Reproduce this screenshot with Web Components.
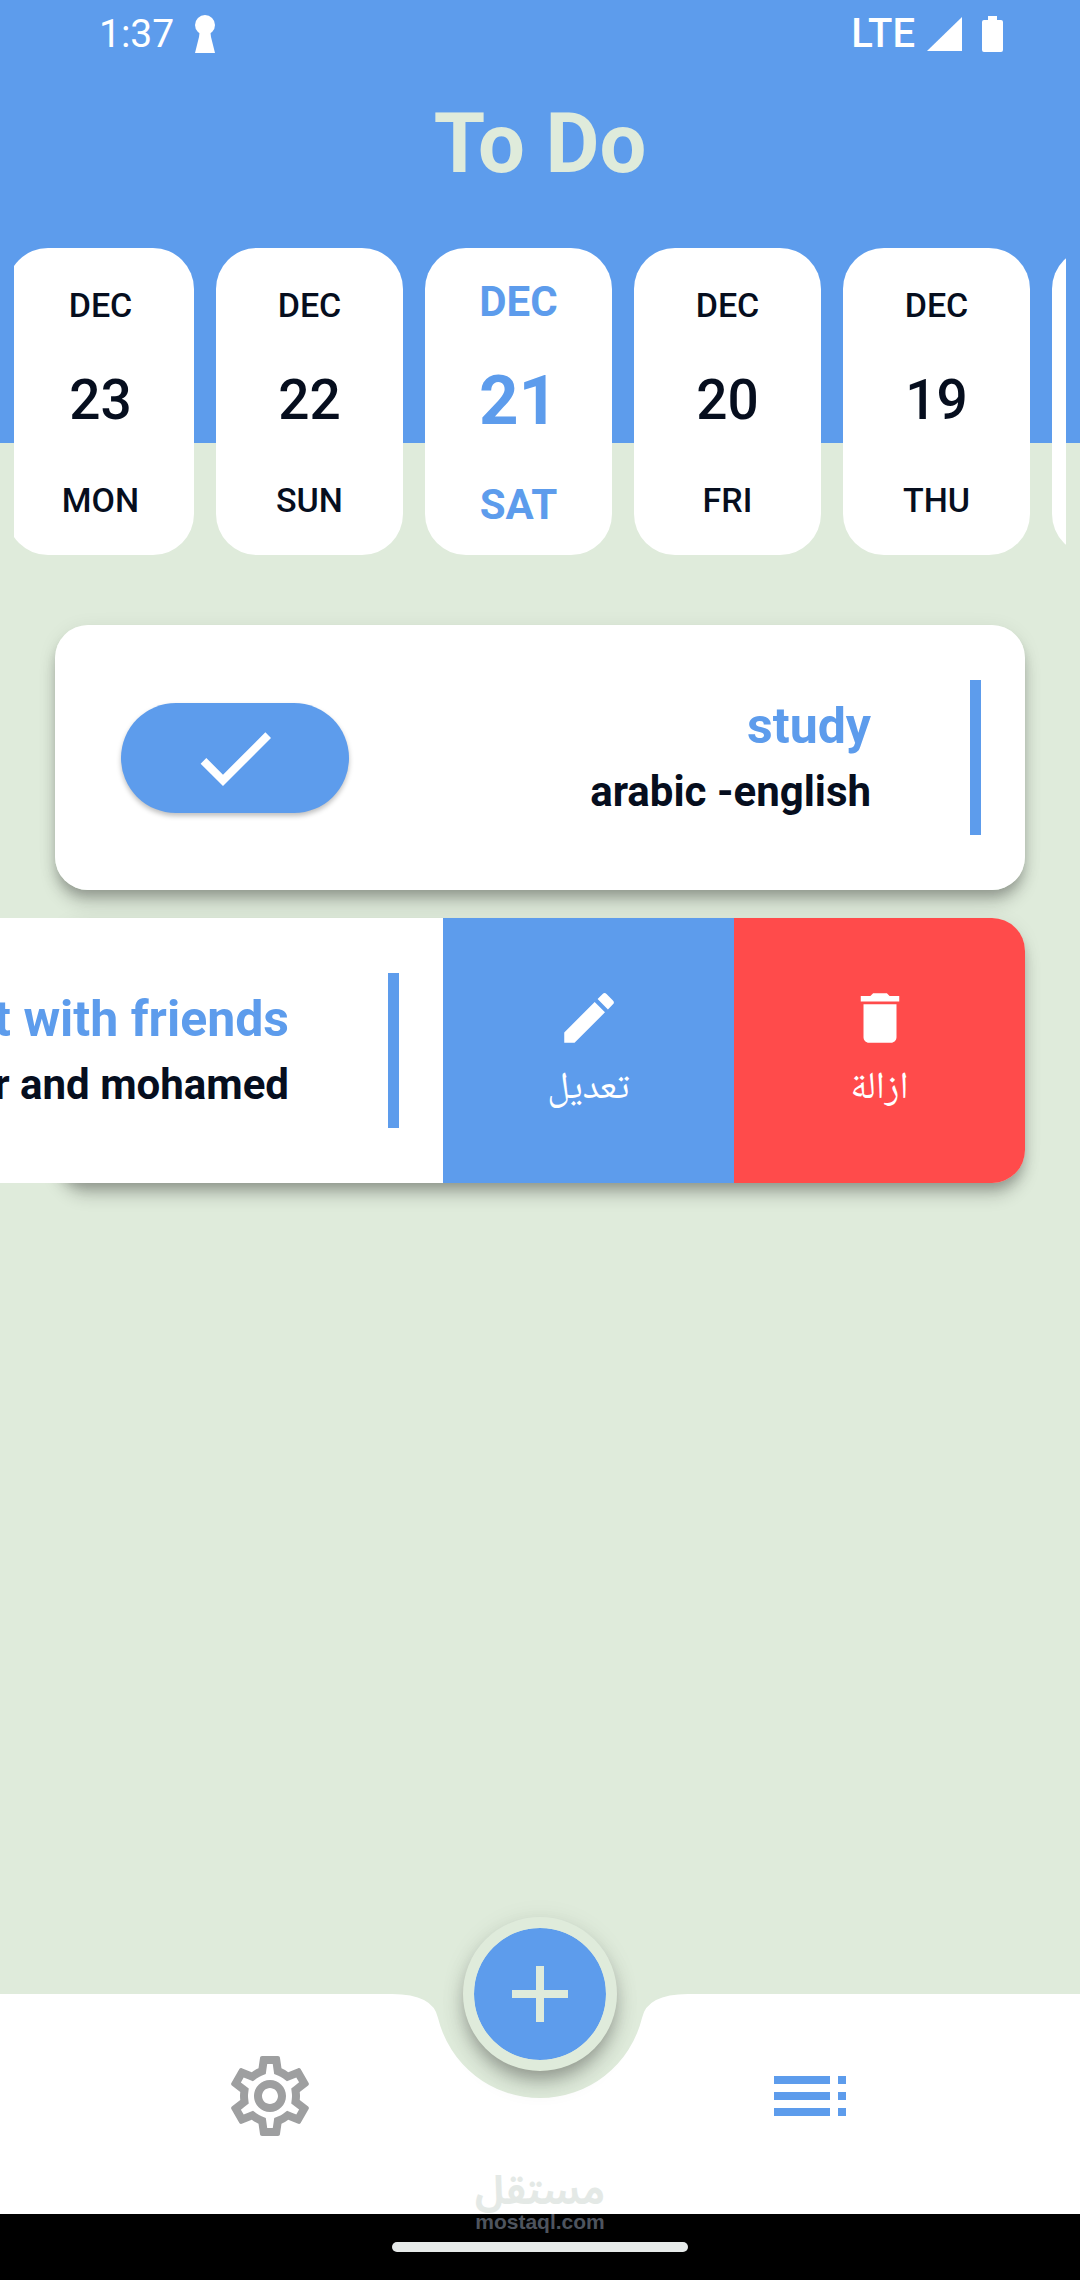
<!DOCTYPE html>
<html lang="en">
<head>
<meta charset="utf-8">
<meta name="viewport" content="width=device-width, initial-scale=1">
<title>To Do</title>
<style>
:root { --blue: #5d9cec; --mint: #dfebdb; --ink: #060e1e; --red: #ff4b4b; --grey: #9e9fa0; }
body { margin: 0; font-family: Roboto, "Noto Naskh Arabic", "Noto Sans Arabic", "Noto Sans", sans-serif; color: var(--ink); background: var(--mint); }
</style>
</head>
<body>
<todo-app></todo-app>
<script>
const reset = `
  * { box-sizing: border-box; }
  button { font: inherit; color: inherit; background: none; border: 0; padding: 0; margin: 0; cursor: pointer; }
  svg { display: block; }
`;
class Base extends HTMLElement {
  connectedCallback() {
    if (this.shadowRoot) return;
    this.attachShadow({ mode: "open" }).innerHTML = `<style>${reset}</style>` + this.view();
  }
}

customElements.define("status-bar", class extends Base {
  view() {
    return `<style>
      :host { display: flex; align-items: center; justify-content: space-between; height: 68px; padding: 0 77px 0 99px; color: #fff; font-size: 39px; line-height: 46px; }
      div { display: flex; align-items: center; }
      .l { gap: 20px; } .r { gap: 12px; }
      .lte { font-weight: 500; font-size: 40px; }
      .bat { margin-left: 8px; }
    </style>
    <div class="l"><span>1:37</span>
      <svg width="22" height="38" viewBox="0 0 22 38" fill="currentColor"><circle cx="11" cy="10" r="10"/><path d="M6 14h10l1 8 4 16H1l4-16z"/></svg></div>
    <div class="r"><span class="lte">LTE</span>
      <svg width="35" height="34" viewBox="0 0 35 34" fill="currentColor"><path d="M35 0v34H0z"/></svg>
      <svg class="bat" width="21" height="36" viewBox="0 0 21 36" fill="currentColor"><path d="M6 0h9v4h4a2 2 0 0 1 2 2v28a2 2 0 0 1-2 2H2a2 2 0 0 1-2-2V6a2 2 0 0 1 2-2h4z"/></svg></div>`;
  }
});

customElements.define("date-card", class extends Base {
  view() {
    return `<style>
      :host { display: block; flex: 0 0 187px; }
      button { display: flex; flex-direction: column; align-items: center; justify-content: space-between; width: 100%; height: 307px; padding: 37px 0 35px; border-radius: 41px; background: #fff; font-size: 34px; line-height: 40px; font-weight: 500; }
      .n { font-size: 55px; line-height: 64px; margin-bottom: 6px; }
      :host([selected]) button { color: var(--blue); font-weight: 700; font-size: 42px; line-height: 48px; padding: 30px 0 26px; }
      :host([selected]) .n { font-size: 69px; line-height: 80px; }
    </style>
    <button type="button"><slot name="month"></slot><span class="n"><slot></slot></span><slot name="day"></slot></button>`;
  }
});

customElements.define("date-strip", class extends Base {
  view() {
    return `<style>
      :host { display: block; margin: 0 14px; overflow: hidden; }
      div { display: flex; gap: 22px; margin-left: -7px; }
    </style><div><slot></slot></div>`;
  }
});

customElements.define("task-action", class extends Base {
  view() {
    return `<style>
      :host { display: flex; flex: 1; }
      button { flex: 1; display: flex; flex-direction: column; align-items: center; justify-content: center; gap: 3px; color: #fff; font-size: 38px; line-height: 62px; }
    </style><button type="button"><slot name="icon"></slot><span dir="rtl" lang="ar"><slot></slot></span></button>`;
  }
});

customElements.define("task-row", class extends Base {
  view() {
    return `<style>
      :host { display: flex; justify-content: flex-end; border-radius: 33px; box-shadow: 0 8px 11px -3px rgba(0,0,0,.2), 0 14px 16px rgba(0,0,0,.15), 0 3px 20px rgba(0,0,0,.07); }
      .card { flex: 0 0 100%; display: flex; align-items: center; padding: 55px 44px 55px 66px; background: #fff; border-radius: 33px; }
      :host([open]) .card { border-radius: 0; }
      .done { width: 228px; height: 110px; border-radius: 55px; background: var(--blue); color: #fff; display: grid; place-items: center; box-shadow: 0 3px 5px rgba(0,0,0,.25); }
      .text { flex: 1; margin-right: 99px; padding-top: 2px; text-align: right; font-weight: 700; white-space: nowrap; line-height: 66px; }
      .title { color: var(--blue); font-size: 50px; }
      .note { font-size: 42px; }
      .bar { width: 11px; height: 155px; background: var(--blue); }
      .actions { display: none; }
      :host([open]) .actions { flex: 0 0 60%; display: flex; border-radius: 0 33px 33px 0; overflow: hidden; }
    </style>
    <div class="card">
      <button class="done" type="button" aria-label="Done"><svg width="96" height="96" viewBox="0 0 24 24" fill="currentColor"><path d="M9 16.17 4.83 12l-1.42 1.41L9 19 21 7l-1.41-1.41z"/></svg></button>
      <div class="text"><div class="title"><slot name="title"></slot></div><div class="note"><slot name="note"></slot></div></div>
      <div class="bar"></div>
    </div>
    <div class="actions"><slot name="actions"></slot></div>`;
  }
});

customElements.define("bottom-nav", class extends Base {
  view() {
    return `<style>
      :host { display: grid; grid-template: 220px / 1fr; }
      .bg, .tabs, .fab { grid-area: 1 / 1; }
      .bg { display: flex; }
      .bg i { flex: 1; background: #fff; }
      .tabs { display: flex; padding-bottom: 16px; }
      .tabs button { flex: 1; display: grid; place-items: center; color: var(--grey); }
      .tabs .on { color: var(--blue); }
      .fab { justify-self: center; align-self: start; margin-top: -77px; width: 154px; height: 154px; border: 11px solid var(--mint); border-radius: 50%; background: var(--blue) padding-box; color: var(--mint); display: grid; place-items: center; box-shadow: 0 10px 14px -3px rgba(0,0,0,.18), 0 14px 22px rgba(0,0,0,.15), 0 3px 26px rgba(0,0,0,.08); }
    </style>
    <div class="bg"><i></i><svg width="300" height="220" viewBox="-150 0 300 220"><path fill="#fff" d="M-150 0h2Q-107 0-102 24A105 105 0 0 0 102 24Q107 0 148 0h2v220h-300z"/></svg><i></i></div>
    <div class="tabs">
      <button type="button" aria-label="Settings"><svg width="96" height="96" viewBox="0 0 24 24" fill="currentColor"><path d="M19.43 12.98c.04-.32.07-.64.07-.98 0-.34-.03-.66-.07-.98l2.11-1.65c.19-.15.24-.42.12-.64l-2-3.46c-.09-.16-.26-.25-.44-.25-.06 0-.12.01-.17.03l-2.49 1c-.52-.4-1.08-.73-1.69-.98l-.38-2.65C14.46 2.18 14.25 2 14 2h-4c-.25 0-.46.18-.49.42l-.38 2.65c-.61.25-1.17.59-1.69.98l-2.49-1c-.06-.02-.12-.03-.18-.03-.17 0-.34.09-.43.25l-2 3.46c-.13.22-.07.49.12.64l2.11 1.65c-.04.32-.07.65-.07.98 0 .33.03.66.07.98l-2.11 1.65c-.19.15-.24.42-.12.64l2 3.46c.09.16.26.25.44.25.06 0 .12-.01.17-.03l2.49-1c.52.4 1.08.73 1.69.98l.38 2.65c.03.24.24.42.49.42h4c.25 0 .46-.18.49-.42l.38-2.65c.61-.25 1.17-.59 1.69-.98l2.49 1c.06.02.12.03.18.03.17 0 .34-.09.43-.25l2-3.46c.12-.22.07-.49-.12-.64l-2.11-1.65zm-1.98-1.71c.04.31.05.52.05.73 0 .21-.02.43-.05.73l-.14 1.13.89.7 1.08.84-.7 1.21-1.27-.51-1.04-.42-.9.68c-.43.32-.84.56-1.25.73l-1.06.43-.16 1.13-.2 1.35h-1.4l-.19-1.35-.16-1.13-1.06-.43c-.43-.18-.83-.41-1.23-.71l-.91-.7-1.06.43-1.27.51-.7-1.21 1.08-.84.89-.7-.14-1.13c-.03-.31-.05-.54-.05-.74s.02-.43.05-.73l.14-1.13-.89-.7-1.08-.84.7-1.21 1.27.51 1.04.42.9-.68c.43-.32.84-.56 1.25-.73l1.06-.43.16-1.13.2-1.35h1.39l.19 1.35.16 1.13 1.06.43c.43.18.83.41 1.23.71l.91.7 1.06-.43 1.27-.51.7 1.21-1.07.85-.89.7.14 1.13zM12 8c-2.21 0-4 1.79-4 4s1.79 4 4 4 4-1.79 4-4-1.79-4-4-4zm0 6c-1.1 0-2-.9-2-2s.9-2 2-2 2 .9 2 2-.9 2-2 2z"/></svg></button>
      <button type="button" class="on" aria-label="Tasks"><svg width="96" height="96" viewBox="0 0 24 24" fill="currentColor"><path d="M3 9h14V7H3v2zm0 4h14v-2H3v2zm0 4h14v-2H3v2zm16 0h2v-2h-2v2zm0-10v2h2V7h-2zm0 6h2v-2h-2v2z"/></svg></button>
    </div>
    <button class="fab" type="button" aria-label="Add task"><svg width="96" height="96" viewBox="0 0 24 24" fill="currentColor"><path d="M19 13h-6v6h-2v-6H5v-2h6V5h2v6h6z"/></svg></button>`;
  }
});

customElements.define("gesture-bar", class extends Base {
  view() {
    return `<style>
      :host { position: relative; display: flex; flex-direction: column; align-items: center; height: 66px; padding-top: 28px; background: #000; }
      .pill { width: 296px; height: 10px; border-radius: 5px; background: #e6eae9; }
      .mark { position: absolute; bottom: 46px; left: 0; right: 0; display: flex; flex-direction: column; align-items: center; }
      .ar { color: #e4e9e6; font: 700 39px/36px "Noto Sans Arabic", "DejaVu Sans", sans-serif; }
      .en { color: #4e545e; font: 700 21px/24px "Liberation Sans", sans-serif; }
    </style>
    <div class="pill"></div>
    <div class="mark"><span class="ar" dir="rtl" lang="ar">مستقل</span><span class="en">mostaql.com</span></div>`;
  }
});

customElements.define("todo-app", class extends Base {
  view() {
    return `<style>
      :host { display: flex; flex-direction: column; min-height: 100vh; overflow: hidden; }
      header { background: var(--blue); }
      h1 { margin: 0; padding: 28px 0 56px; text-align: center; color: var(--mint); font-size: 83px; line-height: 96px; font-weight: 700; }
      date-strip { margin-bottom: -112px; }
      main { flex: 1; display: flex; flex-direction: column; gap: 28px; padding: 182px 55px 28px; }
      .blue { background: var(--blue); } .red { background: var(--red); }
    </style>
    <header>
      <status-bar></status-bar>
      <h1>To Do</h1>
      <date-strip>
        <date-card><span slot="month">DEC</span>23<span slot="day">MON</span></date-card>
        <date-card><span slot="month">DEC</span>22<span slot="day">SUN</span></date-card>
        <date-card selected><span slot="month">DEC</span>21<span slot="day">SAT</span></date-card>
        <date-card><span slot="month">DEC</span>20<span slot="day">FRI</span></date-card>
        <date-card><span slot="month">DEC</span>19<span slot="day">THU</span></date-card>
        <date-card></date-card>
      </date-strip>
    </header>
    <main>
      <task-row><span slot="title">study</span><span slot="note">arabic -english</span></task-row>
      <task-row open><span slot="title">t with friends</span><span slot="note">r and mohamed</span>
        <task-action slot="actions" class="blue"><svg slot="icon" width="66" height="66" viewBox="0 0 24 24" fill="currentColor"><path d="M3 17.25V21h3.75L17.81 9.94l-3.75-3.75zM20.71 7.04a1 1 0 0 0 0-1.41l-2.34-2.34a1 1 0 0 0-1.41 0l-1.83 1.83 3.75 3.75z"/></svg>تعديل</task-action>
        <task-action slot="actions" class="red"><svg slot="icon" width="66" height="66" viewBox="0 0 24 24" fill="currentColor"><path d="M6 19c0 1.100.9 2 2 2h8c1.100 0 2-.9 2-2V7H6zM19 4h-3.500l-1-1h-5l-1 1H5v2h14z"/></svg>ازالة</task-action>
      </task-row>
    </main>
    <bottom-nav></bottom-nav>
    <gesture-bar></gesture-bar>`;
  }
});
</script>
</body>
</html>
